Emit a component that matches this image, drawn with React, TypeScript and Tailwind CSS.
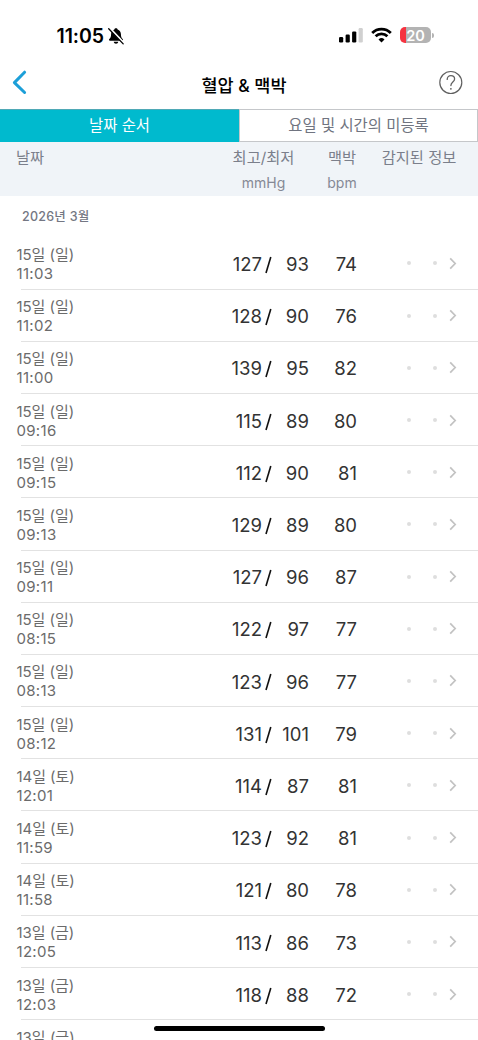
type Reading = {
  date: string;
  time: string;
  sys: number;
  dia: number;
  pulse: number;
};

const READINGS: Reading[] = [
  { date: "15일 (일)", time: "11:03", sys: 127, dia: 93, pulse: 74 },
  { date: "15일 (일)", time: "11:02", sys: 128, dia: 90, pulse: 76 },
  { date: "15일 (일)", time: "11:00", sys: 139, dia: 95, pulse: 82 },
  { date: "15일 (일)", time: "09:16", sys: 115, dia: 89, pulse: 80 },
  { date: "15일 (일)", time: "09:15", sys: 112, dia: 90, pulse: 81 },
  { date: "15일 (일)", time: "09:13", sys: 129, dia: 89, pulse: 80 },
  { date: "15일 (일)", time: "09:11", sys: 127, dia: 96, pulse: 87 },
  { date: "15일 (일)", time: "08:15", sys: 122, dia: 97, pulse: 77 },
  { date: "15일 (일)", time: "08:13", sys: 123, dia: 96, pulse: 77 },
  { date: "15일 (일)", time: "08:12", sys: 131, dia: 101, pulse: 79 },
  { date: "14일 (토)", time: "12:01", sys: 114, dia: 87, pulse: 81 },
  { date: "14일 (토)", time: "11:59", sys: 123, dia: 92, pulse: 81 },
  { date: "14일 (토)", time: "11:58", sys: 121, dia: 80, pulse: 78 },
  { date: "13일 (금)", time: "12:05", sys: 113, dia: 86, pulse: 73 },
  { date: "13일 (금)", time: "12:03", sys: 118, dia: 88, pulse: 72 },
];

export default function App() {
  return (
    <div className="relative flex h-[1040px] w-[478px] flex-col overflow-hidden bg-white font-['Inter','Noto_Sans_CJK_KR',sans-serif]">
      <StatusBar />
      <Header />
      <Tabs />
      <ColumnHeads />
      <div className="flex h-[41.4px] flex-none items-center pt-[2px] pl-[22px] text-[12.5px] font-medium tracking-[0.25px] text-[#747783]">
        2026년 3월
      </div>
      <ul className="flex-none">
        {READINGS.map((r) => (
          <ReadingRow key={r.date + r.time} reading={r} />
        ))}
        {/* next row, cut off by the bottom of the screen */}
        <li className="h-[52.2px] pt-[8px] pl-[16.5px] text-[15px] leading-[19px] text-[#6b6b6b]">13일 (금)</li>
      </ul>
      <div className="absolute bottom-[9px] left-[154px] h-[5px] w-[171px] rounded-full bg-black" />
    </div>
  );
}

function StatusBar() {
  return (
    <div className="flex h-[60px] flex-none items-start justify-between pt-[26px] pr-[44px] pl-[56.5px]">
      <div className="flex items-center gap-[3px]">
        <span className="text-[19.5px] leading-[20px] font-semibold tracking-[-0.1px] text-black">11:05</span>
        <svg width="18" height="18" viewBox="0 0 18 18">
          <path
            d="M9 1.2c.9 0 1.5.5 1.6 1.2 2.1.7 3.2 2.4 3.3 4.7.1 3 .6 3.8 1.8 5 .6.6.3 1.6-.7 1.6H3c-1 0-1.3-1-.7-1.6 1.2-1.2 1.7-2 1.8-5 .1-2.3 1.2-4 3.3-4.7.1-.7.7-1.2 1.6-1.2zM6.7 14.7h4.6c-.2 1.2-1.1 2-2.3 2s-2.1-.8-2.3-2z"
            fill="#000"
          />
          <path d="M2.6 1.1 17 16.2" stroke="#fff" strokeWidth="2.2" />
          <path d="M1.7 1.8 16.2 16.9" stroke="#000" strokeWidth="1.3" strokeLinecap="round" />
        </svg>
      </div>
      <div className="flex h-[18px] items-center">
        <svg width="24" height="16" viewBox="0 0 24 16">
          <rect x="0" y="10" width="4.2" height="5.5" rx="1.2" />
          <rect x="6.6" y="7.5" width="4.2" height="8" rx="1.2" />
          <rect x="13.1" y="4.4" width="4.2" height="11.1" rx="1.2" />
          <rect x="19.6" y="1" width="4.2" height="14.5" rx="1.2" fill="#d0d0d0" />
        </svg>
        <svg className="ml-[8px]" width="21" height="16" viewBox="0 0 21 16" fill="none" stroke="#000" strokeWidth="2.8">
          <path d="M1.2 5.9a13.2 13.2 0 0 1 18.6 0" />
          <path d="M4.6 9.3a8.4 8.4 0 0 1 11.8 0" />
          <path d="m10.5 15.4-3-3a4.3 4.3 0 0 1 6 0z" fill="#000" stroke="none" />
        </svg>
        <div className="ml-[8px] flex h-[16px] w-[31px] items-center justify-center overflow-hidden rounded-[5px] bg-[linear-gradient(to_right,#f53340_6.5px,#b3b3b3_6.5px)] pt-[2px] text-[14.5px] leading-none font-semibold text-white">
          20
        </div>
        <div className="ml-[1px] h-[5px] w-[2px] rounded-r-full bg-[#b3b3b3]" />
      </div>
    </div>
  );
}

function Header() {
  return (
    <div className="flex h-[49px] flex-none items-start justify-between pr-[15px] pl-[12px]">
      <svg className="mt-[10px]" width="26" height="25" viewBox="0 0 26 25" fill="none">
        <path d="M12.6 2.2 2.4 12.6l10.2 9.9" stroke="#1c9fd8" strokeWidth="3" strokeLinecap="round" strokeLinejoin="round" />
      </svg>
      <h1 className="mt-[16px] ml-[11px] text-[17.5px] leading-[20px] font-medium text-black">혈압 &amp; 맥박</h1>
      <svg className="mt-[10px]" width="24" height="25" viewBox="0 0 24 25" fill="none" stroke="#606060">
        <circle cx="11.8" cy="12.5" r="11" strokeWidth="1.2" />
        <path d="M8.2 9.4c0-2.3 1.6-3.8 3.7-3.8s3.7 1.4 3.7 3.4c0 3.1-3.7 3.1-3.7 6.5" strokeWidth="1.3" strokeLinecap="round" />
        <circle cx="11.9" cy="18.8" r=".9" fill="#606060" stroke="none" />
      </svg>
    </div>
  );
}

function Tabs() {
  return (
    <div className="flex h-[33px] flex-none text-[15.4px]">
      <button type="button" className="flex w-[239px] items-center justify-center border-t border-[#4fa9b6] bg-[#00bace] text-white">
        날짜 순서
      </button>
      <button type="button" className="flex flex-1 items-center justify-center border border-[#c5c7ca] bg-white pt-px text-[#707480]">
        요일 및 시간의 미등록
      </button>
    </div>
  );
}

function ColumnHeads() {
  return (
    <div className="flex h-[54px] flex-none bg-[#f0f4f8] pt-[6px] text-[15.3px] leading-[20px] text-[#7b7f8b]">
      <div className="w-[223px] pl-[16px]">날짜</div>
      <div className="w-[81px] text-center">
        <div>최고/최저</div>
        <div className="mt-[5px] text-[14px] text-[#858995]">mmHg</div>
      </div>
      <div className="w-[76px] text-center">
        <div>맥박</div>
        <div className="mt-[5px] text-[14px] text-[#858995]">bpm</div>
      </div>
      <div className="w-[78px] text-center whitespace-nowrap">감지된 정보</div>
    </div>
  );
}

function ReadingRow({ reading }: { reading: Reading }) {
  return (
    <li className="relative flex h-[52.2px] items-center pl-[16.5px] text-[18.5px] text-[#333]">
      <div className="w-[205px] pt-px text-[15px] leading-[19px] text-[#6b6b6b]">
        <div className="tracking-[-0.05px]">{reading.date}</div>
        <div className="tracking-[0.3px]">{reading.time}</div>
      </div>
      <span className="w-[40.5px] pt-[3px] text-right">{reading.sys}</span>
      <svg className="mt-[3px] ml-[3px]" width="7" height="18" viewBox="0 0 7 18">
        <path d="M1 17 5.8 1" stroke="#111" strokeWidth="1.6" />
      </svg>
      <span className="w-[37px] pt-[3px] text-right">{reading.dia}</span>
      <span className="w-[48px] pt-[3px] text-right">{reading.pulse}</span>
      <span className="ml-[50px] h-[4px] w-[4px] rounded-full bg-[#dedede]" />
      <span className="ml-[22px] h-[4px] w-[4px] rounded-full bg-[#dedede]" />
      <svg className="ml-[12px]" width="8" height="13" viewBox="0 0 8 13" fill="none">
        <path d="m1.2 1.4 5 5.1-5 5.1" stroke="#c2c2c2" strokeWidth="1.7" />
      </svg>
      <div className="absolute right-0 bottom-0 left-[21px] h-px bg-[#e2e2e2]" />
    </li>
  );
}
